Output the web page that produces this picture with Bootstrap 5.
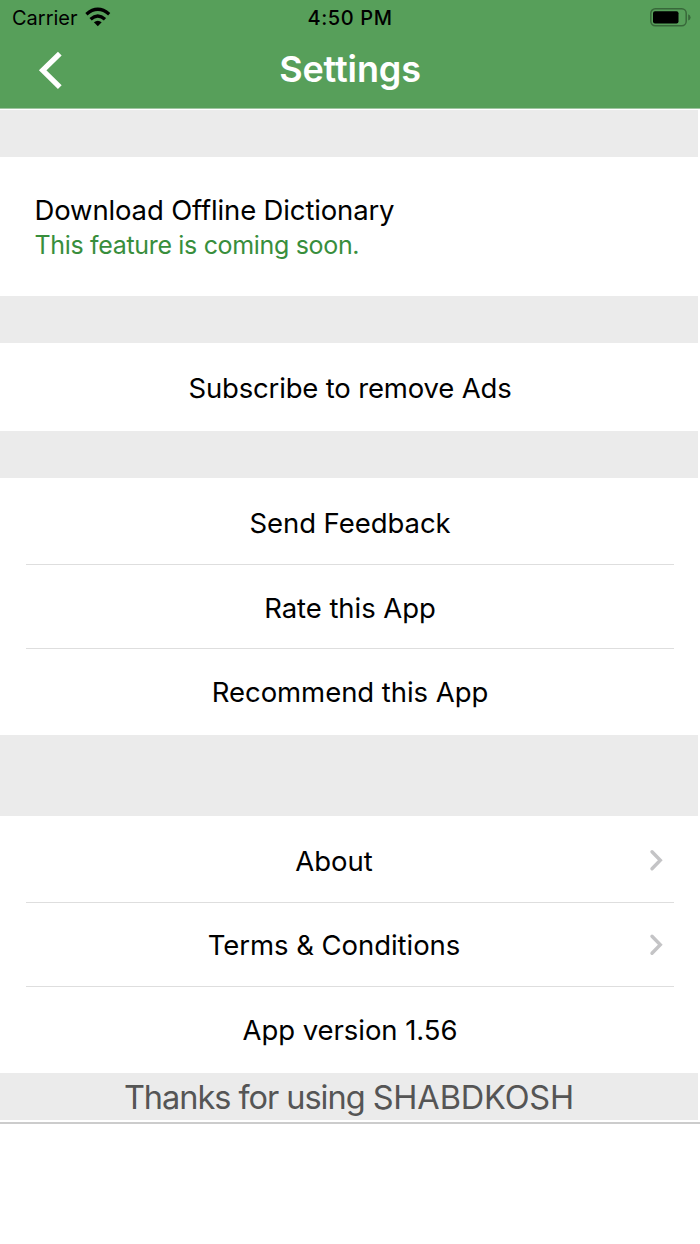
<!DOCTYPE html>
<html lang="en">
<head>
<meta charset="utf-8">
<meta name="viewport" content="width=device-width, initial-scale=1">
<title>Settings</title>
<link href="https://cdn.jsdelivr.net/npm/bootstrap@5.3.0/dist/css/bootstrap.min.css" rel="stylesheet">
<style>
body{font-family:Inter,"Liberation Sans",sans-serif;color:#000;background:#fff;overflow:hidden}
.app-head{background:#579f5a;height:109px;border-bottom:1px solid #9fc5a1;margin-bottom:1px}
.status-bar{height:36px;font-size:20px;line-height:36px}
.wifi{margin-left:7px;overflow:visible}
.s-time{font-weight:500;letter-spacing:.6px}
.title-row{height:72px;line-height:66px}
.screen-title{font-size:36px;font-weight:600;letter-spacing:-.15px;margin:0;line-height:66px}
.side{width:80px}
.gap-band{height:47px;background:#ebebeb;margin-right:2px}
.gap-tall{height:81px}
.offline{height:139px;padding:36px 34.5px 0}
.offline div{line-height:35px;white-space:nowrap}
.entry{font-size:27.5px}
.offline .entry{letter-spacing:-.15px}
.note{font-size:25px;color:#388e3c;letter-spacing:-.33px}
.subscribe{height:88px;line-height:91px;letter-spacing:-.17px}
.lines{--bs-list-group-bg:transparent;--bs-list-group-color:#000;--bs-list-group-border-color:#dedede;padding:2px 26px 0;height:257px;letter-spacing:-.05px}
.lines .list-group-item{height:84.5px;line-height:87px;padding:0}
.link-label{padding-top:3px}
.thanks{font-size:32.5px;line-height:49px;letter-spacing:-1.03px;color:#555}
.brand-name{letter-spacing:-.15px}
.end-rule{height:2px;margin-top:2px;background:#ccc}
</style>
</head>
<body>
<header class="app-head text-white">
  <div class="status-bar row g-0 text-black">
    <div class="col-4 d-flex align-items-center ps-2">
      <span class="ms-1">Carrier</span>
      <svg class="wifi" width="26" height="20" viewBox="0 0 26 20" fill="none" stroke="#000" stroke-width="3.300"><path d="M1.400 6.200Q12.800-3.700 24.200 6.200"/><path d="M5.600 11.200Q12.800 5 20 11.200" stroke-width="3.400"/><path d="M8.900 14.300Q12.800 11 16.700 14.300L12.800 18.200Z" fill="#000" stroke="none"/></svg>
    </div>
    <div class="col-4 text-center s-time">4:50 PM</div>
    <div class="col-4 d-flex align-items-center justify-content-end pe-2">
      <svg width="42" height="20" viewBox="0 0 42 20"><rect x=".8" y=".800" width="35.400" height="17" rx="4.500" fill="none" stroke="#38683a" stroke-width="1.500"/><rect x="3" y="3.200" width="25.500" height="12.400" rx="2" fill="#000"/><path d="M38.200 6.200Q40.600 7.100 40.600 9.400T38.200 12.600Z" fill="#38683a"/></svg>
    </div>
  </div>
  <nav class="title-row d-flex justify-content-between">
    <div class="side"><svg class="d-block" width="80" height="66" viewBox="0 36 80 66"><path d="M59.800 53.700L42.700 70.300L59.800 87.200" fill="none" stroke="#fff" stroke-width="5.300"/></svg></div>
    <h1 class="screen-title">Settings</h1>
    <div class="side"></div>
  </nav>
</header>
<main>
  <div class="gap-band"></div>
  <section class="offline">
    <div class="entry">Download Offline Dictionary</div>
    <div class="note">This feature is coming soon.</div>
  </section>
  <div class="gap-band"></div>
  <div class="entry subscribe text-center">Subscribe to remove Ads</div>
  <div class="gap-band"></div>
  <div class="lines entry list-group list-group-flush rounded-0 text-center">
    <div class="list-group-item">Send Feedback</div>
    <div class="list-group-item">Rate this App</div>
    <div class="list-group-item">Recommend this App</div>
  </div>
  <div class="gap-band gap-tall"></div>
  <div class="lines entry list-group list-group-flush rounded-0 text-center">
    <div class="list-group-item d-flex align-items-center"><span class="flex-fill link-label">About</span><svg width="32" height="24" viewBox="0 0 32 24"><path d="M10 3.800L18.300 12.300L10 20.800" fill="none" stroke="#c4c4c6" stroke-width="3.400" stroke-linecap="round"/></svg></div>
    <div class="list-group-item d-flex align-items-center"><span class="flex-fill link-label">Terms &amp; Conditions</span><svg width="32" height="24" viewBox="0 0 32 24"><path d="M10 4.300L18.300 12.800L10 21.300" fill="none" stroke="#c4c4c6" stroke-width="3.400" stroke-linecap="round"/></svg></div>
    <div class="list-group-item">App version 1.56</div>
  </div>
  <div class="gap-band thanks text-center">Thanks for using <span class="brand-name">SHABDKOSH</span></div>
  <div class="end-rule"></div>
</main>
<script src="https://cdn.jsdelivr.net/npm/bootstrap@5.3.0/dist/js/bootstrap.bundle.min.js"></script>
</body>
</html>
